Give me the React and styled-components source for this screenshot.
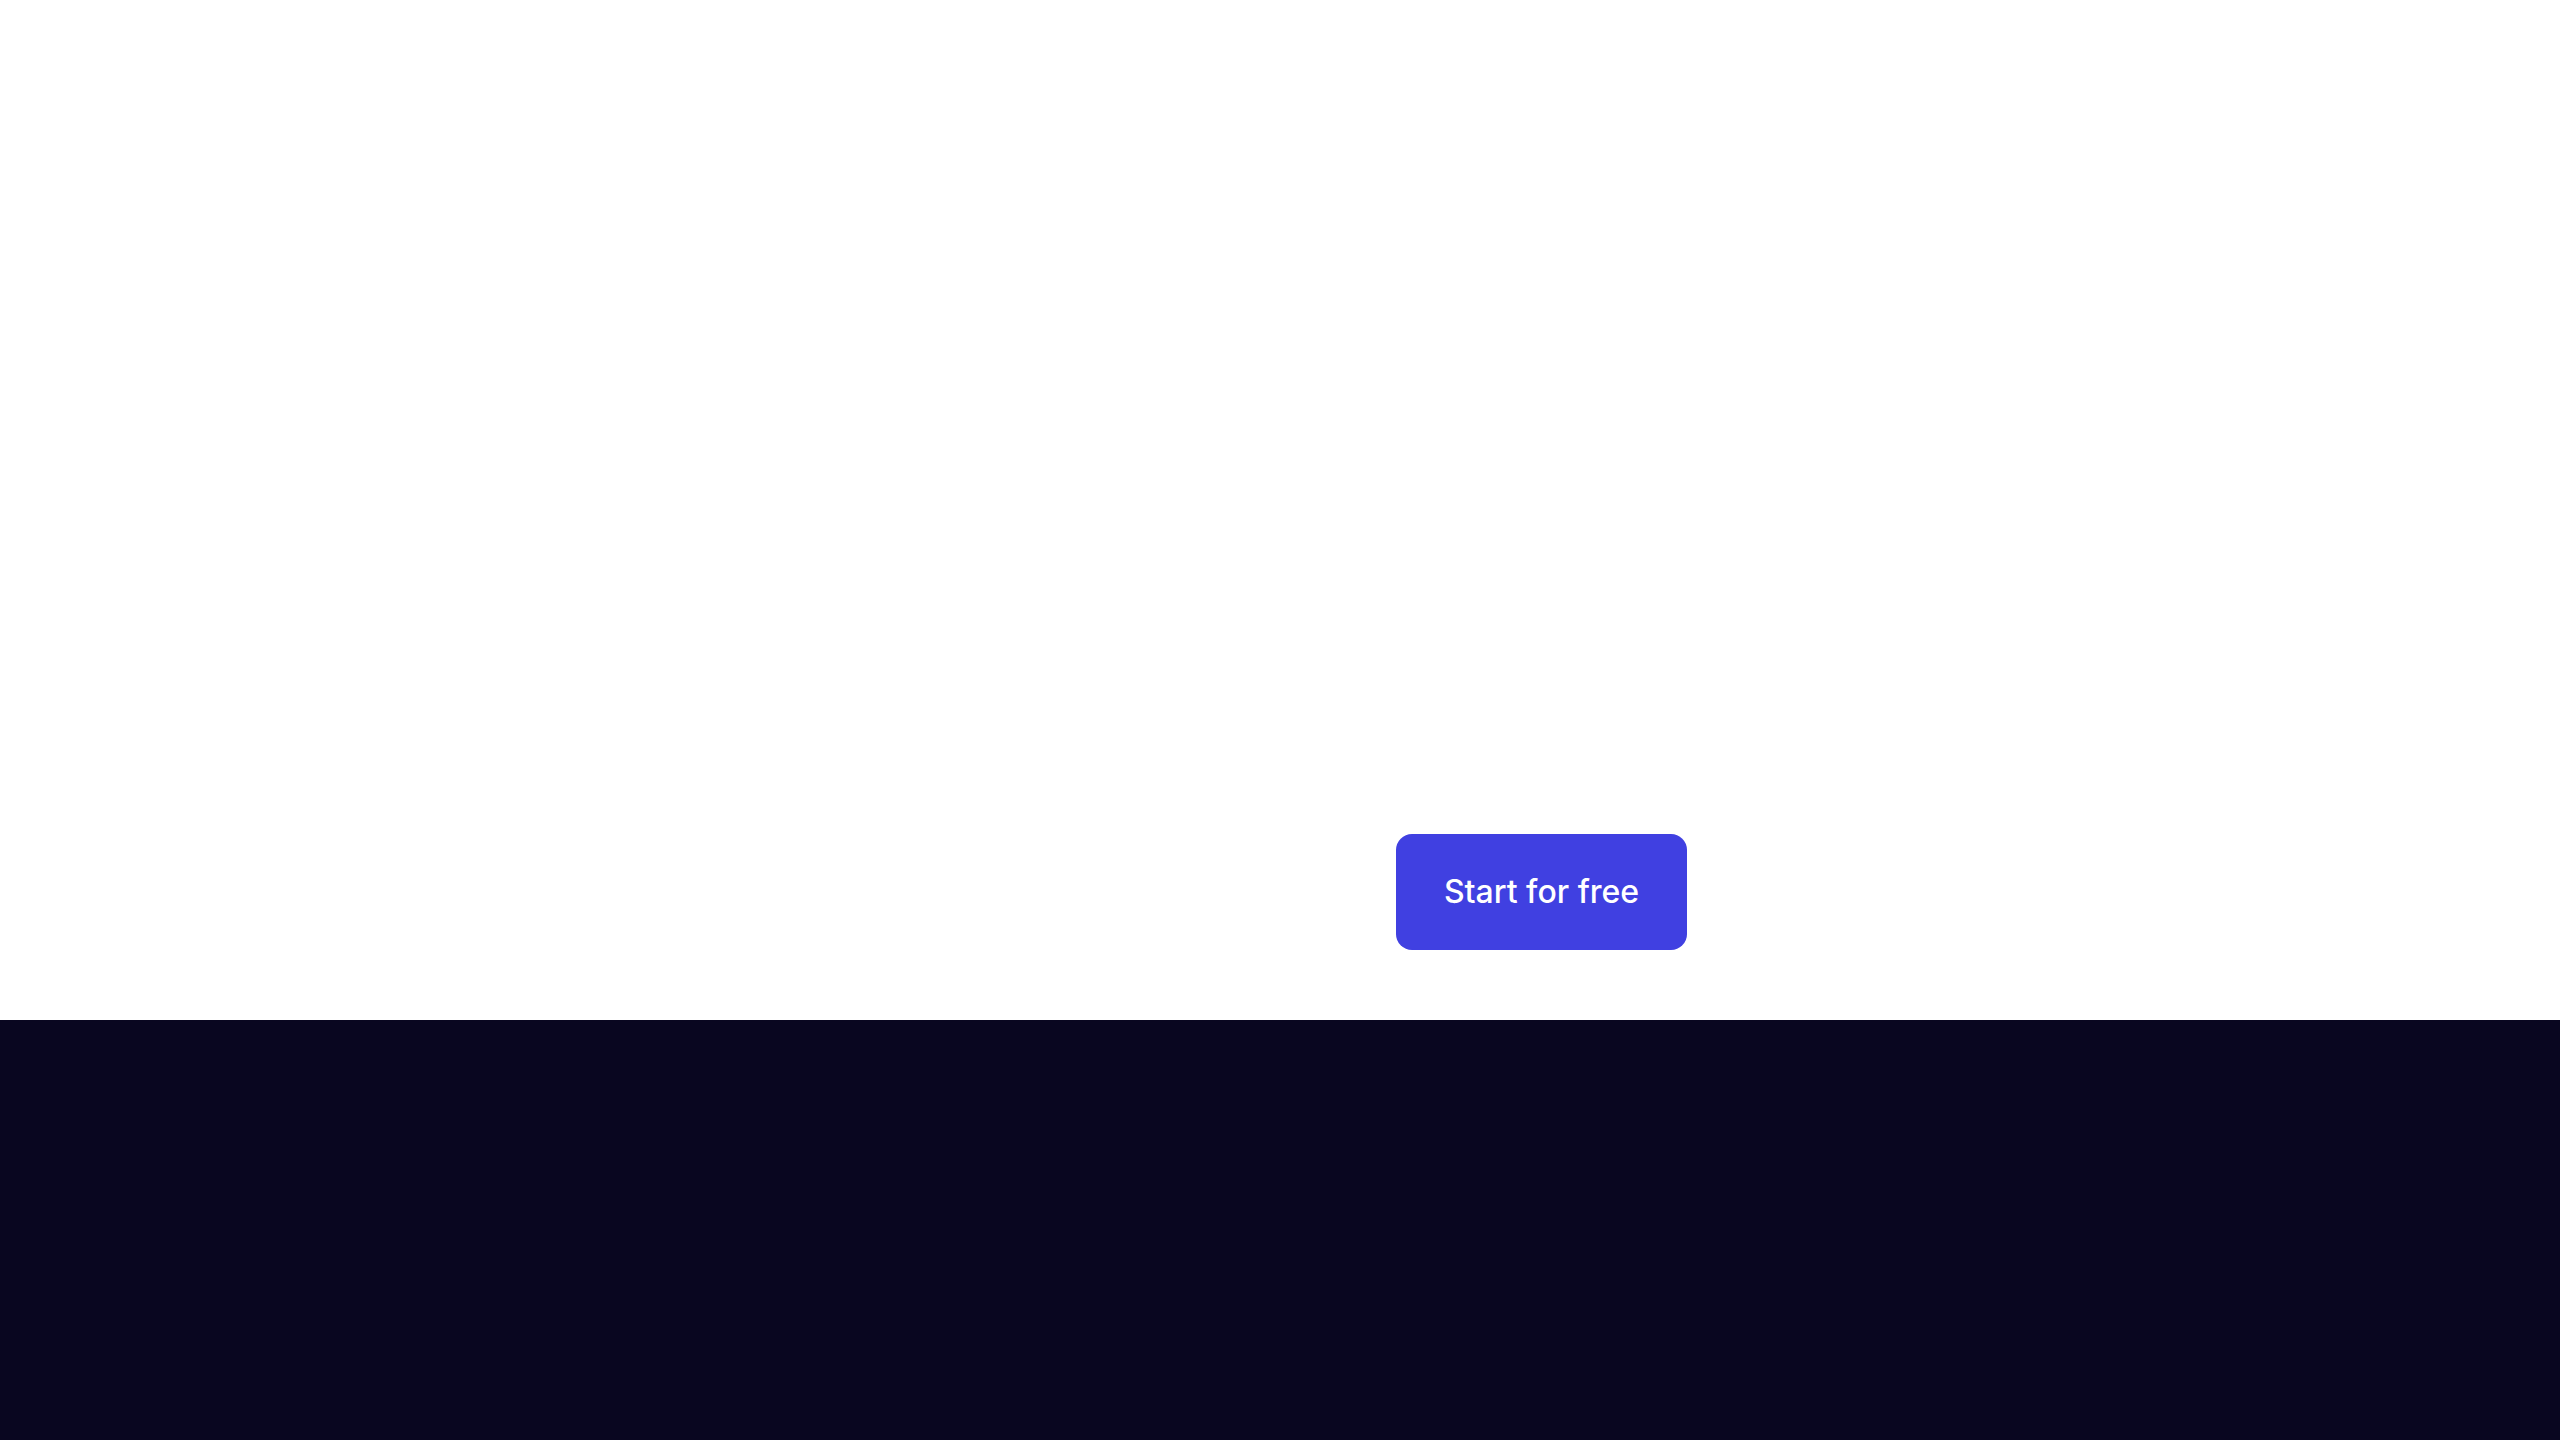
import React from "react";
import styled, { createGlobalStyle } from "styled-components";

const GlobalStyle = createGlobalStyle`
  html, body {
    margin: 0;
    padding: 0;
    background: #ffffff;
    font-family: Inter, "Noto Sans", sans-serif;
  }
`;

const Hero = styled.section`
  display: flex;
  flex-direction: column;
  justify-content: flex-end;
  align-items: flex-start;
  height: 1020px;
  box-sizing: border-box;
  padding: 0 0 70px 1396px;
  background: #ffffff;
`;

const CtaButton = styled.a`
  display: flex;
  align-items: center;
  justify-content: center;
  width: 291px;
  height: 116px;
  box-sizing: border-box;
  border-radius: 16px;
  background: #4040e1;
  color: #ffffff;
  font-size: 32px;
  font-weight: 500;
  line-height: 1;
  text-decoration: none;
  cursor: pointer;
`;

const Footer = styled.footer`
  height: 420px;
  background: #090620;
`;

const App = () => {
  return (
    <>
      <GlobalStyle />
      <Hero>
        <CtaButton href="#">Start for free</CtaButton>
      </Hero>
      <Footer />
    </>
  );
};

export default App;
